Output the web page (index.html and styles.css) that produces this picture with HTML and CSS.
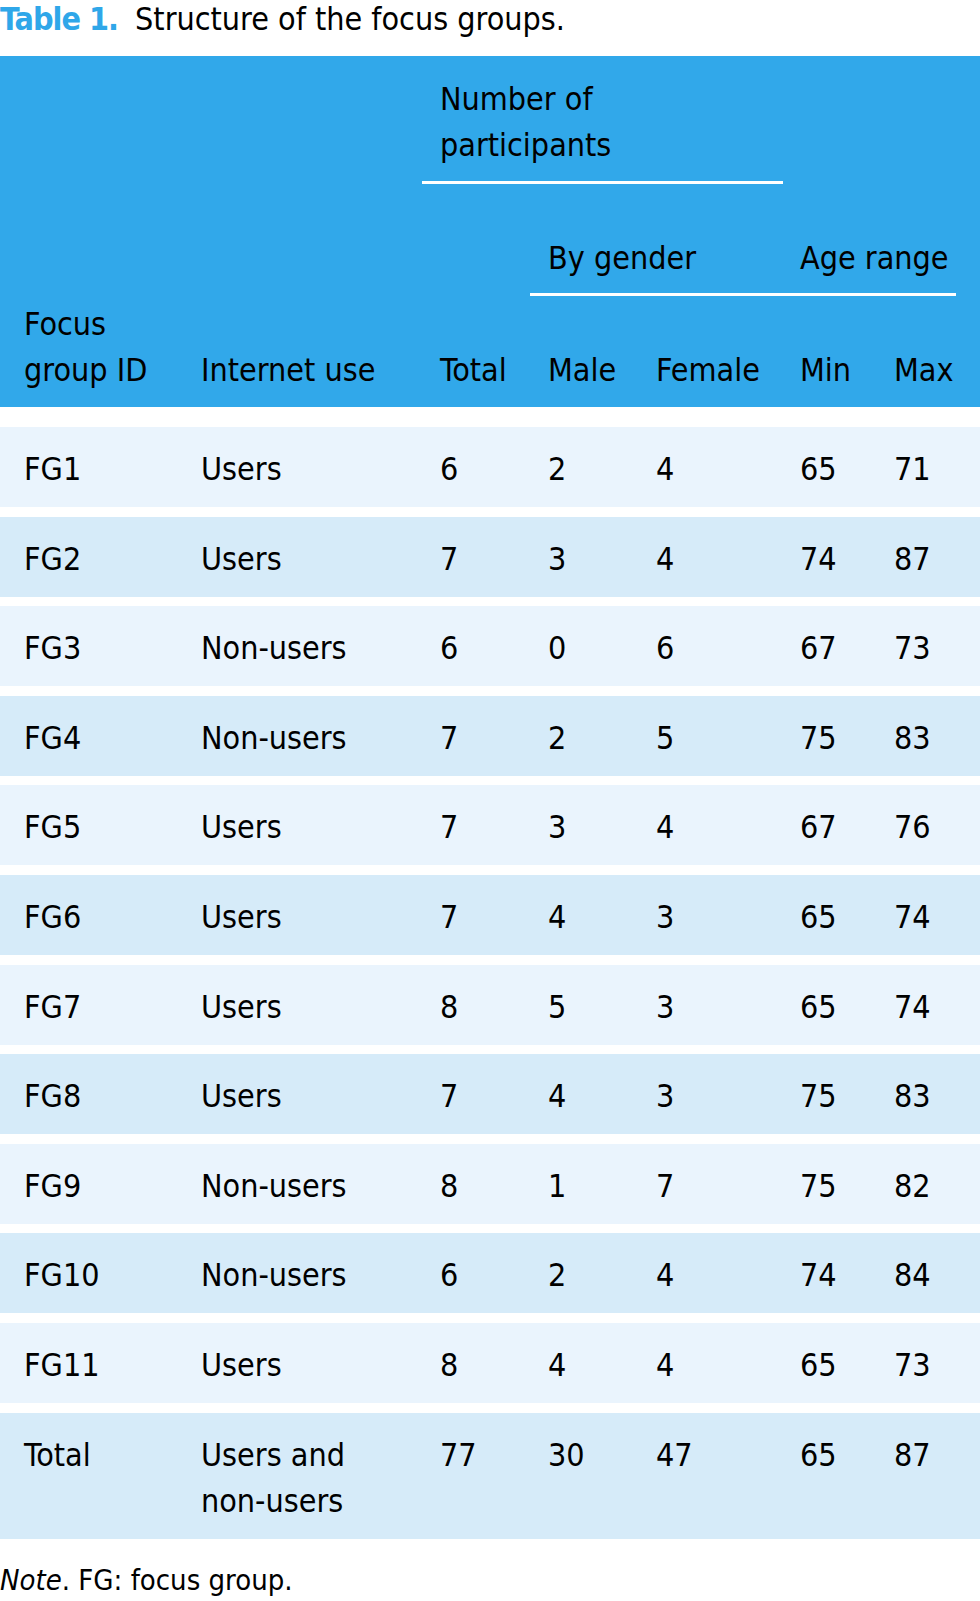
FILE: index.html
```html
<!DOCTYPE html>
<html lang="en">
<head>
<meta charset="utf-8">
<title>Table 1. Structure of the focus groups.</title>
<link rel="stylesheet" href="styles.css">
</head>
<body>
<div class="page">
  <h1 class="caption"><span class="label">Table 1.</span> Structure of the focus groups.</h1>
  <div class="table">
    <div class="head">
      <div class="h-np">Number of<br>participants</div>
      <div class="h-gender">By gender</div>
      <div class="h-age">Age range</div>
      <div class="h-c h-id">Focus<br>group ID</div>
      <div class="h-c c2">Internet use</div>
      <div class="h-c c3">Total</div>
      <div class="h-c c4">Male</div>
      <div class="h-c c5">Female</div>
      <div class="h-c c6">Min</div>
      <div class="h-c c7">Max</div>
    </div>
    <div class="body">
      <div class="row light"><div>FG1</div><div>Users</div><div>6</div><div>2</div><div>4</div><div>65</div><div>71</div></div>
      <div class="row dark"><div>FG2</div><div>Users</div><div>7</div><div>3</div><div>4</div><div>74</div><div>87</div></div>
      <div class="row light"><div>FG3</div><div>Non-users</div><div>6</div><div>0</div><div>6</div><div>67</div><div>73</div></div>
      <div class="row dark"><div>FG4</div><div>Non-users</div><div>7</div><div>2</div><div>5</div><div>75</div><div>83</div></div>
      <div class="row light"><div>FG5</div><div>Users</div><div>7</div><div>3</div><div>4</div><div>67</div><div>76</div></div>
      <div class="row dark"><div>FG6</div><div>Users</div><div>7</div><div>4</div><div>3</div><div>65</div><div>74</div></div>
      <div class="row light"><div>FG7</div><div>Users</div><div>8</div><div>5</div><div>3</div><div>65</div><div>74</div></div>
      <div class="row dark"><div>FG8</div><div>Users</div><div>7</div><div>4</div><div>3</div><div>75</div><div>83</div></div>
      <div class="row light"><div>FG9</div><div>Non-users</div><div>8</div><div>1</div><div>7</div><div>75</div><div>82</div></div>
      <div class="row dark"><div>FG10</div><div>Non-users</div><div>6</div><div>2</div><div>4</div><div>74</div><div>84</div></div>
      <div class="row light"><div>FG11</div><div>Users</div><div>8</div><div>4</div><div>4</div><div>65</div><div>73</div></div>
      <div class="row dark total"><div>Total</div><div>Users and<br>non-users</div><div>77</div><div>30</div><div>47</div><div>65</div><div>87</div></div>
    </div>
  </div>
  <p class="note"><em>Note</em>. FG: focus group.</p>
</div>
</body>
</html>
```

FILE: styles.css
```css
html {
  overflow: hidden;
}

body {
  margin: 0;
  background: #ffffff;
  color: #000000;
  font-family: "DejaVu Sans Condensed", "DejaVu Sans", sans-serif;
  font-stretch: condensed;
  font-size: 32px;
}

.page {
  width: 980px;
}

.caption {
  margin: 0 0 18px 0;
  font-size: 32px;
  font-weight: normal;
  line-height: normal;
  white-space: nowrap;
}

.label {
  color: #2fa7e9;
  font-weight: bold;
  letter-spacing: -1px;
  margin-right: 8px;
}

.head,
.row {
  display: grid;
  grid-template-columns: 177px 239px 108px 108px 144px 94px 1fr;
  line-height: 46px;
  white-space: nowrap;
}

.head {
  background: #31a8ea;
  padding: 20px 24px 14px 24px;
}

.h-np {
  grid-column: 3 / 6;
  grid-row: 1;
  margin: 0 17px 0 -18px;
  padding: 0 0 13px 18px;
  border-bottom: 3px solid #ffffff;
}

.h-gender,
.h-age {
  grid-row: 2;
  margin-top: 51px;
  padding-bottom: 12px;
  border-bottom: 3px solid #ffffff;
}

.h-gender {
  grid-column: 4 / 6;
  margin-left: -18px;
  padding-left: 18px;
}

.h-age {
  grid-column: 6 / 8;
}

.h-c {
  grid-row: 3;
  margin-top: 5px;
  align-self: end;
}

.h-id { grid-column: 1; }
.c2 { grid-column: 2; }
.c3 { grid-column: 3; }
.c4 { grid-column: 4; }
.c5 { grid-column: 5; }
.c6 { grid-column: 6; }
.c7 { grid-column: 7; }

.body {
  display: grid;
  row-gap: 9.6px;
  margin-top: 20px;
}

.row {
  padding: 19px 24px 15px 24px;
  align-items: start;
}

.light {
  background: #eaf4fd;
}

.dark {
  background: #d6ebf9;
}

.note {
  margin: 24px 0 0 0;
  font-size: 29px;
  line-height: normal;
  white-space: nowrap;
}
```
